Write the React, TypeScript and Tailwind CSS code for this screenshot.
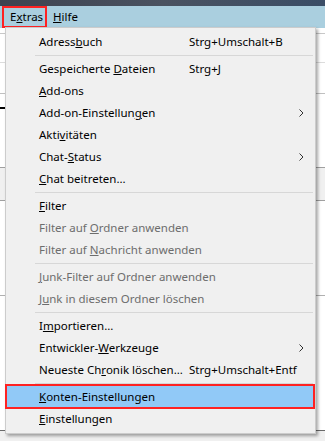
import React from 'react';

type Item =
  | { sep: true }
  | {
      sep?: false;
      pre: string;
      key: string;
      post: string;
      shortcut?: string;
      sub?: boolean;
      disabled?: boolean;
      active?: boolean;
    };

const ITEMS: Item[] = [
  { pre: 'Adress', key: 'b', post: 'uch', shortcut: 'Strg+Umschalt+B' },
  { sep: true },
  { pre: 'Gespeicherte ', key: 'D', post: 'ateien', shortcut: 'Strg+J' },
  { pre: '', key: 'A', post: 'dd-ons' },
  { pre: 'Add-on-Einstellun', key: 'g', post: 'en', sub: true },
  { pre: 'Akti', key: 'v', post: 'itäten' },
  { pre: 'Chat-', key: 'S', post: 'tatus', sub: true },
  { pre: '', key: 'C', post: 'hat beitreten...' },
  { sep: true },
  { pre: '', key: 'F', post: 'ilter' },
  { pre: 'Filter auf ', key: 'O', post: 'rdner anwenden', disabled: true },
  { pre: 'Filter auf ', key: 'N', post: 'achricht anwenden', disabled: true },
  { sep: true },
  { pre: '', key: 'J', post: 'unk-Filter auf Ordner anwenden', disabled: true },
  { pre: 'J', key: 'u', post: 'nk in diesem Ordner löschen', disabled: true },
  { sep: true },
  { pre: 'I', key: 'm', post: 'portieren...' },
  { pre: 'Entwickler-', key: 'W', post: 'erkzeuge', sub: true },
  { pre: 'Neueste Ch', key: 'r', post: 'onik löschen...', shortcut: 'Strg+Umschalt+Entf' },
  { sep: true },
  { pre: '', key: 'K', post: 'onten-Einstellungen', active: true },
  { pre: '', key: 'E', post: 'instellungen' },
];

const Chevron = () => (
  <svg width="5" height="8" viewBox="0 0 5 8" className="text-[#333]">
    <path d="M0.5 0.5 L4 4 L0.5 7.5" fill="none" stroke="currentColor" strokeWidth="1" />
  </svg>
);

export default function App() {
  return (
    <div
      className="relative w-[325px] h-[441px] overflow-hidden bg-white text-[11.5px] text-black"
      style={{ fontFamily: '"Noto Sans", "Open Sans", sans-serif' }}
    >
      {/* window title strip */}
      <div className="h-[6px] bg-gradient-to-r from-[#3d4350] via-[#4a5260] to-[#3a4d66]" />

      {/* menu bar */}
      <div className="h-[22px] bg-[#aacfdf] flex items-center text-black">
        <div className="relative ml-[2px] h-[22px] w-[45px] flex items-center pl-[8px]">
          <span>
            E<u>x</u>tras
          </span>
          <span className="absolute inset-0 border-2 border-[#f22]" />
        </div>
        <span className="ml-[6px]">
          <u>H</u>ilfe
        </span>
      </div>

      {/* window content behind the menu */}
      <div className="h-[5px]" />
      <div className="h-px bg-[#c8c8c8]" />
      <div className="h-[28px]" />
      <div className="h-px bg-[#dcdcdc]" />
      <div className="h-[30px]" />
      <div className="h-px bg-[#c0c0c0]" />
      <div className="h-[28px] flex items-center">
        <div className="w-[6px] h-[2px] bg-black" />
      </div>
      <div className="h-[45px]" />
      <div className="h-px bg-[#a0a0a0]" />
      <div className="h-[32px] bg-[#f0f0f0]" />
      <div className="h-px bg-[#a0a0a0]" />
      <div className="h-[94px]" />
      <div className="h-px bg-[#b0b0b0]" />
      <div className="h-[134px]" />
      <div className="h-px bg-[#6a6a6a]" />
      <div className="h-[10px] bg-[#f0f0f0]" />

      {/* dropdown menu */}
      <div className="absolute left-[5px] top-[27px] w-[311px] border border-[#cccccc] bg-[#f0f0f0] py-[3px] shadow-[2px_2px_3px_rgba(0,0,0,0.35)]">
        {ITEMS.map((it, i) =>
          it.sep ? (
            <div key={i} className="h-[5px] flex items-center pl-[29px] pr-[2px]">
              <div className="h-px w-full bg-[#d7d7d7]" />
            </div>
          ) : (
            <div
              key={i}
              className={`relative h-[22px] flex items-center pl-[33px] ${
                it.active ? 'bg-[#91c9f7]' : ''
              } ${it.disabled ? 'text-[#6d6d6d]' : 'text-black'}`}
            >
              <span className="w-[150px] whitespace-nowrap">
                {it.pre}
                <u>{it.key}</u>
                {it.post}
              </span>
              {it.shortcut && <span className="whitespace-nowrap">{it.shortcut}</span>}
              {it.sub && (
                <span className="absolute right-[11px] top-[7px] flex">
                  <Chevron />
                </span>
              )}
              {it.active && (
                <span className="absolute -top-[2px] -bottom-[1px] -left-[1px] right-0 border-2 border-[#f22]" />
              )}
            </div>
          )
        )}
      </div>
    </div>
  );
}
